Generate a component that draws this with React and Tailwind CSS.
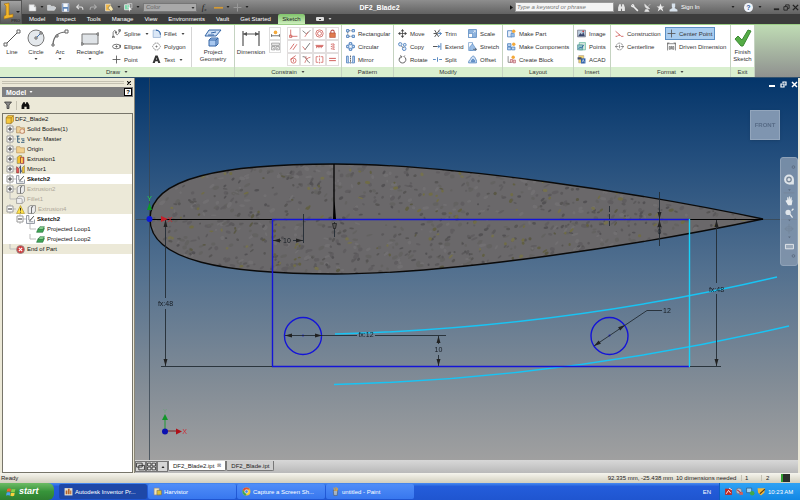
import React, { useState } from "react";

const BLUE = "#4a7ebb";
const RED = "#cf5a56";

// All tool icons are drawn on a 16x16 grid
const icons = {
  spline: <path d="M2 14V6c3-6 5-3 5 1s4 6 7-5M1 13h3v3H1zM6 5h2v2H6zM12 1h3v3h-3z" fill="none" stroke="#555" strokeWidth="1.3" />,
  ellipse: (
    <g fill="none" stroke="#555" strokeWidth="1.4">
      <ellipse cx="8" cy="8" rx="7" ry="4" />
      <path d="M8 6v4M6 8h4M14 6h2v3h-2z" />
    </g>
  ),
  point: <path d="M8 1v14M1 8h14" stroke="#555" strokeWidth="1.5" />,
  fillet: (
    <g>
      <path d="M2 15V2h5c5 0 8 4 8 8v5z" fill="#dbe8f7" stroke="#7a9cc4" />
      <path d="M7 2c5 0 8 4 8 8" fill="none" stroke="#3465a4" strokeWidth="2" />
    </g>
  ),
  polygon: (
    <g fill="none" stroke="#666" strokeWidth="1.2">
      <path d="M5 2h6l4 6-4 6H5L1 8z" strokeDasharray="3 1" />
      <path d="M8 6v4M6 8h4" />
    </g>
  ),
  text: <path d="M1 14 6 1h4l5 13h-4l-1-3H6l-1 3zM7 8h2L8 5z" fill="#333" fillRule="evenodd" />,
  rectangular: (
    <g fill="#d7e6f7" stroke={BLUE} strokeWidth="1.6">
      <path d="M5 3h6M3 5v6M5 13h6" stroke="#666" strokeDasharray="2 1" />
      <path d="M1 1h4v4H1zM11 1h4v4h-4zM1 11h4v4H1zM11 11h4v4h-4z" />
    </g>
  ),
  circular: (
    <g fill="#d7e6f7" stroke={BLUE} strokeWidth="1.5">
      <circle cx="8" cy="8" r="5.5" fill="none" stroke="#7aa2d2" />
      <path d="M6 1h4v4H6zM6 11h4v4H6zM1 6h4v4H1zM11 6h4v4h-4z" />
    </g>
  ),
  mirror: (
    <g>
      <path d="M1 2h3v9l2 3H1zM15 2h-3v9l-2 3h5z" fill="#cfe0f5" stroke={BLUE} strokeWidth="1.5" />
      <path d="M8 1v14" stroke="#333" strokeDasharray="3 1" strokeWidth="1.3" />
    </g>
  ),
  move: (
    <g fill="#444">
      <path d="M8 0l3 4H5zM8 16l3-4H5zM0 8l4-3v6zM16 8l-4-3v6z" />
      <path d="M8 3v10M3 8h10" stroke="#444" strokeWidth="1.4" />
    </g>
  ),
  copy: (
    <g fill="#e3edf9" stroke={BLUE} strokeWidth="1.5">
      <circle cx="4" cy="4" r="3" />
      <circle cx="12" cy="5" r="2.5" />
      <circle cx="11" cy="12" r="3.2" />
      <path d="m6 7 3 3" stroke="#444" />
    </g>
  ),
  rotate: <path d="M5 3a6 6 0 1 0 6 0M4 1l3 2-3 3M12 1l-2 2" fill="none" stroke="#555" strokeWidth="1.6" />,
  trim: (
    <g fill="none" strokeWidth="1.6">
      <path d="m3 2 7 12M12 1 3 14M1 8h5" stroke="#444" />
      <path d="M9 8h6M11 5l4 3-4 4" stroke={BLUE} />
    </g>
  ),
  extend: (
    <g fill="none" strokeWidth="1.6">
      <path d="M0 8h8" stroke="#444" />
      <path d="M8 8h4M9 5l3 3-3 3M14 2v12" stroke={BLUE} />
    </g>
  ),
  split: <path d="M0 8h5M11 8h5M8 4v8" stroke={BLUE} strokeWidth="1.6" />,
  scale: (
    <g>
      <path d="M1 1h14v14H1z" fill="#8fb4de" stroke={BLUE} strokeWidth="1.3" />
      <path d="M1 8h7v7H1z" fill="#fff" stroke={BLUE} />
      <path d="m9 7 4-4M10 3h3v3" stroke="#fff" fill="none" />
    </g>
  ),
  stretch: (
    <g>
      <path d="M1 1h7v14H1z" fill="#fff" stroke={BLUE} />
      <path d="M8 3l6 9v3H3V9z" fill="#9dbfe6" stroke={BLUE} />
      <path d="M9 13h6M13 11l2 2-2 2" stroke="#333" fill="none" />
    </g>
  ),
  offset: (
    <g fill="#cfe0f5" stroke={BLUE} strokeWidth="1.4">
      <path d="M1 14c0-5 3-5 4-8s5-6 7-2 4 6 3 10z" />
      <path d="M6 12c0-3 2-5 4-4s2 3 2 4z" fill="#6c97cc" />
    </g>
  ),
  makePart: (
    <g>
      <path d="M1 3h8v11H1z" fill="#e6effa" stroke={BLUE} strokeWidth="1.4" />
      <path d="M7 8h6v6H7z" fill="#9dbfe6" stroke={BLUE} />
      <circle cx="12" cy="4" r="3" fill="#f4a93a" />
    </g>
  ),
  makeComponents: (
    <g>
      <path d="M1 3h6v5H1zM1 9h6v5H1zM8 9h6v5H8z" fill="#bdd5f0" stroke={BLUE} strokeWidth="1.4" />
      <circle cx="12" cy="4" r="3" fill="#f4a93a" />
    </g>
  ),
  createBlock: (
    <g>
      <path d="M2 2v11h6" fill="none" stroke="#777" strokeWidth="1.4" />
      <path d="M6 8h4v5H6zM11 9h4v5h-4z" fill="#f3d2cd" stroke="#a45" />
      <circle cx="11" cy="4" r="3" fill="#f4a93a" />
    </g>
  ),
  image: (
    <g>
      <path d="M1 2h14v12H1z" fill="#bcd" stroke="#556" />
      <path d="m2 13 4-6 3 3 2-5 3 8z" fill="#39466b" />
      <circle cx="11" cy="4" r="1.5" fill="#c33" />
    </g>
  ),
  points: (
    <g>
      <path d="M4 1h11v13H4z" fill="#d6e9dc" stroke="#4a8" />
      <path d="M1 5h9v9H1z" fill="#8fc5c5" stroke="#3b7f86" />
      <path d="m3 12 3-3 2 2 4-6" fill="none" stroke="#2458a0" strokeWidth="1.6" />
    </g>
  ),
  acad: (
    <g>
      <path d="M3 1h9v13H3z" fill="#f2d36a" stroke="#a98" />
      <path d="M7 6h8v9H7z" fill="#2d5fa8" />
      <path d="M1 4h7v4H1z" fill="#444f68" />
      <path d="m9 13 2-5 2 5" stroke="#fff" fill="none" />
    </g>
  ),
  construction: <path d="m1 4 8 7M1 13h3l2-2h3l2 2h4" fill="none" stroke={RED} strokeWidth="1.5" />,
  centerline: (
    <g fill="none" stroke="#666" strokeWidth="1.2">
      <circle cx="8" cy="8" r="6" strokeDasharray="4 1" />
      <path d="M0 8h6M10 8h6M8 5v6" />
    </g>
  ),
  driven: (
    <g fill="none" stroke="#555" strokeWidth="1.2">
      <path d="M1 1v14M15 1v14M1 3h14M1 3l3-2M15 3l-3-2M4 8h2v5H4zM10 8h2v5h-2zM8 7v6" />
    </g>
  ),
  autoDim: (
    <g>
      <path d="M1 9v5M15 9v5M1 12h14" stroke="#555" strokeWidth="1.4" />
      <circle cx="8" cy="6" r="3.2" fill="#f4a93a" />
    </g>
  ),
  showDim: (
    <g fill="#eee" stroke="#888" strokeWidth="1.2">
      <path d="M1 2h14v4H1zM1 8h6v6H1zM9 8h6v6H9zM3 10l2 2M11 12l2-2" />
    </g>
  ),
  // constraint glyphs
  coincident: <path d="M3 1v12h12M1 11h4v4H1z" fill="none" stroke={RED} strokeWidth="1.4" />,
  collinear: (
    <g fill="none">
      <path d="m1 3 7 6 7-7" stroke="#555" strokeWidth="1.2" />
      <path d="m5 14 6-9" stroke={RED} strokeWidth="1.3" />
    </g>
  ),
  concentric: (
    <g fill="none" stroke={RED} strokeWidth="1.4">
      <circle cx="8" cy="8" r="6.5" />
      <circle cx="8" cy="8" r="3.5" />
    </g>
  ),
  fix: (
    <g>
      <path d="M5 8V5a3 3 0 0 1 6 0v3" fill="none" stroke="#b55" strokeWidth="1.8" />
      <path d="M3 7h10v8H3z" fill="#e07a4e" stroke="#b0442f" />
    </g>
  ),
  parallel: <path d="M2 13 9 3M7 14l7-10" stroke={RED} strokeWidth="1.5" />,
  perpendicular: (
    <g fill="none" strokeWidth="1.4">
      <path d="M5 14 14 2" stroke="#555" />
      <path d="m1 8 5 6" stroke={RED} />
    </g>
  ),
  horizontal: <path d="M1 6h14M2 10h2M6 10h2M10 10h2M2 8h12" stroke={RED} strokeWidth="1.6" />,
  vertical: <path d="M9 2v12M6 3v2M6 7v2M6 11v2M11 4v2M11 8v2M11 12v2" stroke={RED} strokeWidth="1.6" />,
  tangent: (
    <g fill="none" stroke={RED} strokeWidth="1.4">
      <circle cx="8" cy="10" r="4.5" />
      <path d="m2 8 10-7M8 8v4" />
    </g>
  ),
  smooth: (
    <g fill="none" strokeWidth="1.3">
      <path d="M1 3c8-1 6 8 13 11" stroke="#555" />
      <path d="M5 14c2-6 4-9 10-10M7 2v5" stroke={RED} />
    </g>
  ),
  symmetric: <path d="M6 3H2v10h4M10 3h4v10h-4M8 1v3M8 6v4M8 12v3" fill="none" stroke={RED} strokeWidth="1.3" />,
  equal: <path d="M2 6h12M2 10h12" stroke={RED} strokeWidth="1.7" />,
  // title bar
  newDoc: <path d="M2 3h9l3 4v7H2zM11 3v4h3" fill="#f1f3f5" stroke="#ccc" />,
  open: <path d="M1 13V4h5l1 2h6v2h3l-3 5z" fill="#c9ced3" stroke="#eee" />,
  save: (
    <g>
      <path d="M2 1h12v14H2z" fill="#5f86b8" stroke="#dde" />
      <path d="M4 1h8v6H4zM5 10h6v5H5z" fill="#f4f6f8" />
    </g>
  ),
  undo: <path d="M7 3 3 7l4 4M3 7h8c3 0 3 3 3 5" fill="none" stroke="#ddd" strokeWidth="2" />,
  redo: <path d="m9 3 4 4-4 4M13 7H5c-3 0-3 3-3 5" fill="none" stroke="#aaa" strokeWidth="2" />,
  update: (
    <g>
      <path d="M1 2h9v12H1z" fill="#f2b84a" stroke="#fff" />
      <path d="m5 9 5-6 5 8-4 4z" fill="#f9e9b0" stroke="#555" />
    </g>
  ),
  select: (
    <g>
      <path d="M1 3h9v9H1z" fill="#7da" stroke="#eee" strokeWidth="1.4" />
      <path d="M6 1h8v8H6z" fill="none" stroke="#ccc" strokeWidth="1.4" />
      <path d="m8 6 6 6-3 0-1 4z" fill="#fff" />
    </g>
  ),
  gold: <path d="M0 7h16v3H0z" fill="#d59b35" />,
  plus: <path d="M8 1v14M1 8h14" stroke="#999" strokeWidth="1.8" />,
  binoculars: <path d="M2 14V8l2-6h3v4h2V2h3l2 6v6h-5v-4H7v4z" fill="#e5e5e5" />,
  wrench: <path d="M3 2c3-1 5 1 5 4l7 7-2 2-7-7C3 8 1 6 2 3l2 2 1-1z" fill="#eee" />,
  dish: <path d="M3 2c0 6 4 9 9 8zM8 7l5-5M5 11l-2 4h8l-3-4" fill="#e5e5e5" stroke="#e5e5e5" />,
  star: <path d="m8 1 2 5h5l-4 3 2 6-5-4-5 4 2-6-4-3h5z" fill="#eee" />,
  user: <path d="M5 1h6v5l-1 3 5 3v3H1v-3l5-3-1-3z" fill="#d8e2ec" />,
  // browser tree
  part: <path d="M2 5 5 1h10v10l-4 4H2zM2 5h9v10M11 5l4-4" fill="#f6c83c" stroke="#8a6417" />,
  bodies: (
    <g>
      <path d="M1 3h6l1 2h7v9H1z" fill="#ecd09a" stroke="#a07b4a" />
      <circle cx="11" cy="11" r="4" fill="#f6e6cf" stroke="#b05a3a" />
    </g>
  ),
  view: <path d="M1 2h5M3 2v11h4M3 7h4M9 7h6M9 13h6M11 10h4" fill="none" stroke="#335c7a" strokeWidth="1.7" />,
  folder: <path d="M1 3h6l1 2h7v9H1z" fill="#f1cf8d" stroke="#b08c54" />,
  extrusion: (
    <g>
      <path d="M2 4 6 1h4v11l-4 3H2z" fill="#f5c22e" stroke="#775" />
      <path d="M8 4h6v11H8z" fill="#e3473e" stroke="#733" />
      <path d="M9 5h3v9H9z" fill="#ffd954" />
    </g>
  ),
  mirrorPart: (
    <g>
      <path d="M1 3 5 6v8H1z" fill="#e55" stroke="#733" />
      <path d="M15 1l-4 4v9h4z" fill="#f5c22e" stroke="#775" />
      <path d="M8 1v14M6 3l4 9" stroke="#347" strokeWidth="1.6" />
    </g>
  ),
  sketch: (
    <g fill="none" stroke="#6b7280" strokeWidth="1.3">
      <path d="M1 1h4v8M1 1v14h14V8M5 12h8M5 9h4" />
      <path d="m7 10 7-8" stroke="#333" strokeWidth="1.6" />
    </g>
  ),
  greyExtrusion: <path d="M2 4 6 1h4v3H8v11H2zM8 4l3-3h4v10l-3 4H8z" fill="#ececec" stroke="#555" />,
  greyFillet: <path d="M1 6 5 2h6c3 0 4 3 4 5v4l-4 4H1zM1 6h7c2 0 3 1 3 4v5" fill="#eee" stroke="#777" />,
  warning: (
    <g>
      <path d="m8 1 7 14H1z" fill="#ffe14a" stroke="#a58a1a" />
      <path d="M8 5v5M8 12v1.500" stroke="#222" strokeWidth="1.6" />
    </g>
  ),
  loop: (
    <g>
      <path d="m1 13 3-7h11l-3 7z" fill="#3fa455" stroke="#1f6b34" />
      <path d="m4 8 3-5h8l-3 5z" fill="#86cf8d" stroke="#1f6b34" />
    </g>
  ),
  end: (
    <g>
      <circle cx="8" cy="8" r="7" fill="#d33a3a" stroke="#8d8d8d" strokeWidth="1.5" />
      <path d="m5 5 6 6M11 5l-6 6" stroke="#fff" strokeWidth="2" />
    </g>
  ),
  filter: <path d="M1 2h14l-5 6v7H6V8z" fill="#8a8a8a" stroke="#333" strokeWidth="1.5" />,
  find: <path d="M1 14V8l3-6h3v3h2V2h3l3 6v6h-5v-4H6v4z" fill="#111" />,
  cascade: <path d="M1 2h10v7H1zM5 6h10v8H5z" fill="#ddd" stroke="#222" strokeWidth="1.4" />,
  tile: <path d="M1 2h6v5H1zM9 2h6v5H9zM1 9h6v5H1zM9 9h6v5H9z" fill="#eee" stroke="#222" strokeWidth="1.4" />,
  // taskbar
  inventor: (
    <g>
      <path d="M1 2h14v13H1z" fill="#e8e0cf" />
      <path d="M3 6h3v7H3zM7 3h3v10H7zM11 6h2v7h-2z" fill="#b3652e" />
    </g>
  ),
  harvistor: (
    <g>
      <path d="M2 2h9v12H2z" fill="#f4e6b8" stroke="#987" />
      <path d="M7 6h8v8H7z" fill="#d8c13b" stroke="#765" />
    </g>
  ),
  chrome: (
    <g>
      <circle cx="8" cy="8" r="7" fill="#f3c932" />
      <path d="M8 1a7 7 0 0 1 6 3.500H8A3.500 3.500 0 0 0 5 10L1.500 5A7 7 0 0 1 8 1" fill="#dd4b39" />
      <path d="M1.500 5 5 10l3 2-1 3A7 7 0 0 1 1.500 5" fill="#3aa757" />
      <circle cx="8" cy="8" r="3" fill="#4a86e8" stroke="#fff" />
    </g>
  ),
  paint: (
    <g>
      <path d="M4 6h8l-1 9H5z" fill="#a7b4c4" stroke="#456" />
      <path d="M5 1l2 6M9 0v7M12 2l-2 5" stroke="#d9a441" strokeWidth="2" />
    </g>
  ),
  trayRed: (
    <g>
      <path d="M2 3h12v11H2z" fill="#c3261f" />
      <path d="m4 12 4-6 4 5M9 2l5 3" stroke="#fff" fill="none" strokeWidth="1.6" />
    </g>
  ),
  trayNet: (
    <g>
      <circle cx="7" cy="7" r="5" fill="#b9c0c8" stroke="#667" />
      <path d="M8 9h6v5H8z" fill="#d4605a" />
      <path d="m4 5 6 5" stroke="#b33" strokeWidth="2" />
    </g>
  ),
  trayPc: (
    <g>
      <path d="M1 2h9v8H1z" fill="#9fd0ee" stroke="#246" />
      <circle cx="11" cy="11" r="4" fill="#3fa84a" />
    </g>
  ),
  trayShield: (
    <g>
      <path d="M1 2h13l-1 8-6 5-5-5z" fill="#f3b93a" />
      <path d="m5 12 9-8" stroke="#5a3b12" strokeWidth="2" />
    </g>
  ),
};

const Icon = ({ name, className = "size-[9px]" }) => (
  <svg viewBox="0 0 16 16" className={`shrink-0 ${className}`} aria-hidden="true">
    {icons[name]}
  </svg>
);

const Caret = ({ className = "fill-[#444]" }) => (
  <svg viewBox="0 0 6 4" className={`h-[2px] w-[4px] shrink-0 ${className}`} aria-hidden="true">
    <path d="M0 0h6L3 4z" />
  </svg>
);

const Tool = ({ icon, label, caret, active }) => (
  <button
    type="button"
    className={`flex h-[13px] items-center gap-[3px] whitespace-nowrap ${
      active ? "-ml-[2px] w-[50px] border border-[#5b8fc4] bg-[#a9cdf0] pl-px" : ""
    }`}
  >
    <Icon name={icon} />
    {label}
    {caret && <Caret className="ml-px fill-[#444]" />}
  </button>
);

const BigTool = ({ lines, caret, className, children }) => (
  <button type="button" className={`flex flex-col items-center ${className}`}>
    <svg viewBox="0 0 18 18" className="mt-[2px] mb-[2px] size-[18px]" aria-hidden="true">
      {children}
    </svg>
    {lines.map((l) => (
      <span key={l} className="leading-[7px] whitespace-nowrap">{l}</span>
    ))}
    {caret && <Caret className="mt-[2px] fill-[#444]" />}
  </button>
);

const Panel = ({ title, caret, className, children }) => (
  <section className={`flex shrink-0 flex-col border-r border-[#c5d3c1] ${className}`}>
    <div className="flex h-[42px] bg-white pt-[2px]">{children}</div>
    <h2 className="flex h-[10px] items-center justify-center gap-[4px] bg-[#d9efcf]">
      {title}
      {caret && <Caret />}
    </h2>
  </section>
);

const menuTabs = ["Model", "Inspect", "Tools", "Manage", "View", "Environments", "Vault", "Get Started"];

const constraints = [
  "coincident", "collinear", "concentric", "fix",
  "parallel", "perpendicular", "horizontal", "vertical",
  "tangent", "smooth", "symmetric", "equal",
];

const TitleButton = ({ icon, label, className = "w-[14px]" }) => (
  <button type="button" aria-label={label} className={`flex h-full items-center justify-center ${className}`}>
    <Icon name={icon} />
  </button>
);

const MenuCaret = () => (
  <span className="flex w-[5px] shrink-0 justify-center">
    <Caret className="fill-[#222]" />
  </span>
);

const TitleBar = () => (
  <div className="flex h-[14px] items-center bg-linear-to-b from-[#8e8e8e] to-[#626262] pl-[3px] text-white">
    <TitleButton icon="newDoc" label="New" />
    <MenuCaret />
    <TitleButton icon="open" label="Open" />
    <TitleButton icon="save" label="Save" />
    <TitleButton icon="undo" label="Undo" />
    <TitleButton icon="redo" label="Redo" />
    <TitleButton icon="update" label="Update" className="ml-[2px] w-[14px]" />
    <MenuCaret />
    <TitleButton icon="select" label="Select" />
    <MenuCaret />
    <div className="relative ml-[3px] h-[9px] w-[54px] shrink-0">
      <select
        aria-label="Color"
        className="block h-full w-full appearance-none border border-[#777] bg-[#a9a9a9] pl-[2px] text-[6px] leading-[7px] text-[#666] italic"
      >
        <option>Color</option>
      </select>
      <Caret className="pointer-events-none absolute top-[4px] right-[2px] fill-[#333]" />
    </div>
    <button type="button" className="w-[14px] font-['Liberation_Serif',serif] text-[9px] text-[#222] italic">
      f<sub className="text-[5px]">x</sub>
    </button>
    <TitleButton icon="gold" label="Line style" />
    <MenuCaret />
    <TitleButton icon="plus" label="Add" />
    <MenuCaret />
    <h1 className="flex-1 text-center text-[7px] font-bold">DF2_Blade2</h1>
    <svg viewBox="0 0 4 6" className="mr-[2px] h-[5px] w-[3px] fill-[#111]" aria-hidden="true">
      <path d="M0 0v6l4-3z" />
    </svg>
    <input
      type="text"
      aria-label="Search help"
      placeholder="Type a keyword or phrase"
      className="h-[10px] w-[99px] border border-[#9a9a9a] bg-[#f4f4f4] px-px text-[6px] italic placeholder:text-[#777]"
    />
    <div className="flex items-center pl-px">
      <TitleButton icon="binoculars" label="Search" className="w-[13px]" />
      <TitleButton icon="wrench" label="Subscription" className="w-[13px]" />
      <TitleButton icon="dish" label="Communication" className="w-[13px]" />
      <TitleButton icon="star" label="Favorites" className="w-[13px]" />
      <TitleButton icon="user" label="Account" className="w-[13px]" />
    </div>
    <button type="button" className="w-[50px] pl-px text-left">Sign In</button>
    <MenuCaret />
    <button
      type="button"
      aria-label="Help"
      className="ml-[9px] size-[9px] rounded-full bg-[#f0f4fa] text-[7px] font-bold text-[#2e5a9c]"
    >
      ?
    </button>
    <span className="ml-[4px] flex"><MenuCaret /></span>
    <div className="ml-[9px] flex">
      <button type="button" aria-label="Minimize" className="w-[10px]">
        <svg viewBox="0 0 8 8" className="mx-auto size-[7px]"><path d="M1 5h6v2H1z" fill="#222" /></svg>
      </button>
      <button type="button" aria-label="Restore" className="w-[10px]">
        <svg viewBox="0 0 8 8" className="mx-auto size-[7px]"><path d="M3 3V1h4v4H5M1 3h4v4H1z" fill="none" stroke="#222" /></svg>
      </button>
      <button type="button" aria-label="Close" className="w-[9px]">
        <svg viewBox="0 0 8 8" className="mx-auto size-[7px]"><path d="m1 1 6 6M7 1 1 7" stroke="#222" strokeWidth="1.6" /></svg>
      </button>
    </div>
  </div>
);

const MenuTabs = () => (
  <nav className="flex h-[10px] items-center gap-[11px] bg-[#3c3c3c] pl-[7px] text-white">
    {menuTabs.map((t) => (
      <button key={t} type="button" className="whitespace-nowrap">{t}</button>
    ))}
    <button
      type="button"
      className="-ml-[4px] h-full w-[27px] rounded-t-[2px] bg-linear-to-b from-[#7fc36a] to-[#cdeebd] text-[#222]"
    >
      Sketch
    </button>
    <button type="button" aria-label="Ribbon display" className="flex items-center gap-[4px]">
      <span className="flex h-[4px] w-[8px] items-center justify-center rounded-[1px] bg-[#ddd]">
        <span className="h-px w-[2px] bg-[#333]" />
      </span>
      <Caret className="fill-[#ccc]" />
    </button>
  </nav>
);

const Ribbon = () => (
  <div className="flex overflow-hidden border-t border-b border-t-[#9ccf86] border-b-[#33526e] bg-linear-to-b from-[#bfdcb4] to-[#8f918f] text-[#333]">
    <Panel title="Draw" caret className="w-[235px]">
      <BigTool lines={["Line"]} className="w-[24px]">
        <path d="M3 15 15 3" stroke="#555" />
        <path d="M1 14h3v3H1zM14 1h3v3h-3z" fill="#fff" stroke="#666" />
      </BigTool>
      <BigTool lines={["Circle"]} caret className="w-[24px]">
        <circle cx="9" cy="9" r="8" fill="#e4e8ec" stroke="#777" />
        <path d="m9 9 5-5" stroke="#3f6fae" />
        <path d="M8 8h2v2H8zM13 3h2v2h-2z" fill="#fff" stroke="#666" />
      </BigTool>
      <BigTool lines={["Arc"]} caret className="w-[24px]">
        <path d="M2 16C2 8 7 3 15 3" fill="none" stroke="#666" strokeWidth="1.2" />
        <path d="M1 15h2v2H1zM5 6h2v2H5zM14 1h3v3h-3z" fill="#fff" stroke="#666" />
      </BigTool>
      <BigTool lines={["Rectangle"]} caret className="w-[36px]">
        <path d="M1 5h16v10H1z" fill="#dfe3e7" stroke="#777" />
        <path d="M0 14h2v2H0zM16 4h2v2h-2z" fill="#fff" stroke="#666" />
      </BigTool>
      <div className="ml-[4px] grid grid-flow-col grid-cols-[40px_36px] grid-rows-[13px_13px_13px]">
        <Tool icon="spline" label="Spline" caret />
        <Tool icon="ellipse" label="Ellipse" />
        <Tool icon="point" label="Point" />
        <Tool icon="fillet" label="Fillet" caret />
        <Tool icon="polygon" label="Polygon" />
        <Tool icon="text" label="Text" caret />
      </div>
      <div className="ml-[3px] flex border-l border-[#d5d5d5]">
        <BigTool lines={["Project", "Geometry"]} className="w-[42px]">
          <path d="M5 1h12l-5 6H1z" fill="#cfe0f5" stroke="#3465a4" />
          <path d="m7 4 5-1M4 6h6" stroke="#3465a4" />
          <path d="M5 11l2-2h7v6l-2 2H5zM5 11h7v6M12 11l2-2" fill="#a9c8ef" stroke="#3465a4" />
        </BigTool>
      </div>
    </Panel>

    <Panel title="Constrain" caret className="w-[107px]">
      <BigTool lines={["Dimension"]} className="w-[32px]">
        <path d="M1 2v15M17 2v15M1 5h16" stroke="#555" strokeWidth="1.2" />
        <path d="m1 5 4-2v4zM17 5l-4-2v4z" fill="#555" />
      </BigTool>
      <div className="ml-[2px] flex flex-col">
        <button type="button" aria-label="Automatic dimensions" className="flex h-[13px] w-[12px] items-center justify-center border border-[#ddd]">
          <Icon name="autoDim" />
        </button>
        <button type="button" aria-label="Show constraints" className="flex h-[13px] w-[12px] items-center justify-center border border-[#ddd]">
          <Icon name="showDim" />
        </button>
      </div>
      <div className="ml-[6px] grid grid-cols-[13px_13px_13px_13px] grid-rows-[13px_13px_13px]">
        {constraints.map((c) => (
          <button key={c} type="button" aria-label={c} className="flex items-center justify-center border border-[#e2dede]">
            <Icon name={c} />
          </button>
        ))}
      </div>
    </Panel>

    <Panel title="Pattern" className="w-[52px]">
      <div className="pl-[4px]">
        <Tool icon="rectangular" label="Rectangular" />
        <Tool icon="circular" label="Circular" />
        <Tool icon="mirror" label="Mirror" />
      </div>
    </Panel>

    <Panel title="Modify" className="w-[109px]">
      <div className="grid grid-flow-col grid-cols-[35px_35px_35px] grid-rows-[13px_13px_13px] pl-[4px]">
        <Tool icon="move" label="Move" />
        <Tool icon="copy" label="Copy" />
        <Tool icon="rotate" label="Rotate" />
        <Tool icon="trim" label="Trim" />
        <Tool icon="extend" label="Extend" />
        <Tool icon="split" label="Split" />
        <Tool icon="scale" label="Scale" />
        <Tool icon="stretch" label="Stretch" />
        <Tool icon="offset" label="Offset" />
      </div>
    </Panel>

    <Panel title="Layout" className="w-[71px]">
      <div className="pl-[4px]">
        <Tool icon="makePart" label="Make Part" />
        <Tool icon="makeComponents" label="Make Components" />
        <Tool icon="createBlock" label="Create Block" />
      </div>
    </Panel>

    <Panel title="Insert" className="w-[37px]">
      <div className="pl-[3px]">
        <Tool icon="image" label="Image" />
        <Tool icon="points" label="Points" />
        <Tool icon="acad" label="ACAD" />
      </div>
    </Panel>

    <Panel title="Format" caret className="w-[120px]">
      <div className="grid grid-flow-col grid-cols-[52px_60px] grid-rows-[13px_13px_13px] pl-[4px]">
        <Tool icon="construction" label="Construction" />
        <Tool icon="centerline" label="Centerline" />
        <span />
        <Tool icon="point" label="Center Point" active />
        <Tool icon="driven" label="Driven Dimension" />
      </div>
    </Panel>

    <Panel title="Exit" className="w-[24px]">
      <BigTool lines={["Finish", "Sketch"]} className="w-[24px]">
        <path d="m1 10 3-3 4 4 6-10 3 1-8 15H7z" fill="#55ab46" stroke="#3c8a33" />
      </BigTool>
    </Panel>
  </div>
);

const treeItems = [
  { label: "Solid Bodies(1)", icon: "bodies", expand: "+" },
  { label: "View: Master", icon: "view", expand: "+" },
  { label: "Origin", icon: "folder", expand: "+" },
  { label: "Extrusion1", icon: "extrusion", expand: "+" },
  { label: "Mirror1", icon: "mirrorPart", expand: "+" },
  { label: "Sketch2", icon: "sketch", expand: "+", bold: true, light: true },
  { label: "Extrusion2", icon: "greyExtrusion", expand: "+", dim: true },
  { label: "Fillet1", icon: "greyFillet", dim: true },
  { label: "Extrusion4", icon: "greyExtrusion", expand: "-", dim: true, warn: true },
  { label: "Sketch2", icon: "sketch", expand: "-", bold: true, light: true, level: 1 },
  { label: "Projected Loop1", icon: "loop", light: true, level: 2 },
  { label: "Projected Loop2", icon: "loop", light: true, level: 2 },
  { label: "End of Part", icon: "end" },
];

const indents = ["pl-[3px]", "pl-[13px]", "pl-[23px]"];

const TreeRow = ({ item }) => (
  <li
    className={`flex h-[10px] items-center gap-[2px] whitespace-nowrap ${indents[item.level || 0]} ${
      item.light ? "bg-white" : "bg-[#ece9d8]"
    } ${item.bold ? "font-bold" : ""} ${item.dim ? "text-[#aca899]" : ""}`}
  >
    <svg viewBox="0 0 10 10" className="h-[10px] w-[10px] -mr-[2px] shrink-0" aria-hidden="true">
      <path d={item.expand ? "M4 0v10M7 5h3" : "M4 0v5h6"} fill="none" stroke="#bbb" />
      {item.expand && <path d="M1 2h6v6H1z" fill="#fff" stroke="#999" />}
      {item.expand && <path d={item.expand === "+" ? "M2 5h4M4 3v4" : "M2 5h4"} stroke="#333" />}
    </svg>
    {item.warn && <Icon name="warning" />}
    <Icon name={item.icon} />
    {item.label}
  </li>
);

const ModelBrowser = () => (
  <aside className="flex w-[135px] shrink-0 flex-col border-r border-[#8a8778] bg-[#ece9d8] pr-px pl-[2px]">
    <div className="flex h-[9px] items-center gap-[3px] pr-[2px]">
      <div className="h-[3px] flex-1 border-y border-[#c5c2b2]" />
      <button type="button" aria-label="Close browser">
        <svg viewBox="0 0 6 6" className="size-[4px]"><path d="m0 0 6 6M6 0 0 6" stroke="#111" strokeWidth="1.6" /></svg>
      </button>
    </div>
    <div className="flex h-[10px] items-center bg-[#7f7f7f] pr-px pl-[4px] text-white">
      <h2 className="text-[7px] font-bold">Model</h2>
      <Caret className="ml-[3px] fill-white" />
      <button type="button" aria-label="Browser help" className="ml-auto size-[8px] border border-black bg-white text-[6px] leading-[6px] font-bold text-black">
        ?
      </button>
    </div>
    <div className="flex h-[16px] items-center pl-[2px]">
      <button type="button" aria-label="Filter"><Icon name="filter" className="size-[8px]" /></button>
      <span className="mx-[4px] h-[9px] w-px bg-[#c5c2b2]" />
      <button type="button" aria-label="Find"><Icon name="find" /></button>
    </div>
    <ul className="flex-1 border border-[#77756a] bg-white">
      <li className="flex h-[10px] items-center gap-px bg-[#ece9d8] pl-[2px]">
        <Icon name="part" />
        DF2_Blade2
      </li>
      {treeItems.map((item, i) => (
        <TreeRow key={i} item={item} />
      ))}
    </ul>
  </aside>
);

// simple seeded generator so the stone texture stays the same between renders
const makeSpeckles = (count, colors, size) => {
  let seed = count;
  const rnd = () => {
    seed = (seed * 16807) % 2147483647;
    return seed / 2147483647;
  };
  rnd();
  return Array.from({ length: count }, () => ({
    x: 150 + rnd() * 610,
    y: 163 + rnd() * 112,
    rx: 1 + rnd() * size,
    ry: 0.8 + rnd() * size * 0.5,
    rot: -60 + rnd() * 80,
    fill: colors[Math.floor(rnd() * colors.length)],
  }));
};

const speckles = [
  ...makeSpeckles(700, ["#5a585a", "#777577", "#605f5c"], 2.6),
  ...makeSpeckles(420, ["#454446", "#4b4a48", "#525052"], 1.5),
  ...makeSpeckles(210, ["#75702f", "#5c5a2c", "#7d783c", "#514f30"], 1.8),
];
const foil = "M150 219C150 177 225 164 335 164C450 164 640 193 763 219C640 245 450 274 335 274C225 274 150 261 150 219Z";

const arrows = {
  up: "M0 0l-2 7h4z",
  down: "M0 0l-2-7h4z",
  left: "M0 0l7-2v4z",
  right: "M0 0l-7-2v4z",
};

const Arrow = ({ x, y, dir, fill = "#222" }) => <path d={arrows[dir]} transform={`translate(${x} ${y})`} fill={fill} />;

const Drawing = () => (
  <svg viewBox="135 78 663 382" className="absolute inset-0 h-full w-full" role="img" aria-label="Blade sketch">
    <defs>
      <clipPath id="foil"><path d={foil} /></clipPath>
    </defs>
    <path d={foil} fill="#6a686a" />
    <g clipPath="url(#foil)" opacity="0.6">
      {speckles.map((s, i) => (
        <ellipse key={i} cx={s.x} cy={s.y} rx={s.rx} ry={s.ry} fill={s.fill} transform={`rotate(${s.rot} ${s.x} ${s.y})`} />
      ))}
    </g>
    <path d="M149.500 78V460M136 219.500H798" stroke="#3a4652" strokeWidth="0.8" />
    <path d={foil} fill="none" stroke="#0a0a0a" strokeWidth="1.3" />
    <path d="M150 219.500H763" stroke="#000" strokeWidth="1.2" />
    <path d="M334 164V219" stroke="#000" strokeWidth="1.3" />

    {/* projected curves */}
    <g fill="none" stroke="#18c4f4" strokeWidth="1.5">
      <path d="M335 334Q560 328 777 277" />
      <path d="M334 384.500Q560 379 789 326" />
    </g>

    {/* profile */}
    <g fill="none" stroke="#1414d8" strokeWidth="1.4">
      <path d="M689 219.500H272.500V366.500H689" />
      <circle cx="303" cy="336" r="18.500" />
      <circle cx="609.500" cy="336" r="18.500" />
    </g>
    <path d="M689.500 219V367" stroke="#18d0f8" strokeWidth="1.4" />
    <circle cx="303" cy="335.500" r="1" fill="#1414d8" />
    <circle cx="609.500" cy="335.500" r="1" fill="#1414d8" />

    {/* dimensions */}
    <g fill="none" stroke="#222b33" strokeWidth="0.9">
      <path d="M165.500 220V298M165.500 309V366M161 366.500H272M690 366.500H721" />
      <path d="M716.500 220V283M716.500 294V366" />
      <path d="M273 240.500H281M293 240.500H303M303.500 214V243" />
      <path d="M334.500 222V237M659.500 192V246M609.500 206V212M609.500 214V219M609.500 221V226" />
      <path d="M285 335.500H357M375 335.500H446M438.500 336V344M438.500 355V366" />
      <path d="M594 346 647 310.500H662" />
    </g>
    <Arrow x={165.5} y={220} dir="up" />
    <Arrow x={165.5} y={366} dir="down" />
    <Arrow x={716.5} y={220} dir="up" />
    <Arrow x={716.5} y={366} dir="down" />
    <Arrow x={273} y={240.5} dir="left" />
    <Arrow x={303} y={240.5} dir="right" />
    <Arrow x={285} y={335.5} dir="left" />
    <Arrow x={322} y={335.5} dir="right" />
    <Arrow x={438.5} y={336} dir="up" />
    <Arrow x={438.5} y={366} dir="down" />
    <path d="M334.500 200l-1.500 19h3z" fill="#000" />
    <path d="M332.500 223.500h4l-1 5h-2z" fill="#555" stroke="#222" strokeWidth="0.8" />
    <Arrow x={659.5} y={219} dir="down" />
    <Arrow x={659.5} y={220} dir="up" />
    <path d="M0 0l7-2v4z" transform="translate(594 346) rotate(-34)" fill="#222" />
    <path d="M0 0l-7-2v4z" transform="translate(625 325) rotate(-34)" fill="#222" />
    <g fill="#161c22" fontSize="7" textAnchor="middle">
      <text x="165.500" y="306">fx:48</text>
      <text x="716.500" y="292">fx:48</text>
      <text x="366" y="337">fx:12</text>
      <text x="287" y="243">10</text>
      <text x="438.500" y="352">10</text>
      <text x="667" y="313">12</text>
      <text x="659.500" y="234">0</text>
    </g>

    {/* origin */}
    <circle cx="149.500" cy="219" r="3" fill="#0b16d8" />
    <path d="M149.500 203l-2.500 7h5z" fill="#0c9a24" />
    <path d="M168 219l-7-3v6z" fill="#c4202a" />
    <text x="149.500" y="201" fontSize="7" textAnchor="middle" fill="#28d048">Y</text>
    <text x="170" y="221.500" fontSize="7" textAnchor="middle" fill="#d8202a">X</text>

    {/* axis indicator */}
    <path d="M165 431V419" stroke="#1c9a30" />
    <path d="M165 431H176" stroke="#7a2020" />
    <path d="M165 414l-3 6h6z" fill="#12962a" />
    <path d="M182 431.500l-6-3v6z" fill="#b01018" />
    <circle cx="165" cy="431.500" r="3" fill="#0b10b0" />
    <text x="184.500" y="434" fontSize="7" textAnchor="middle" fill="#d02a34">X</text>
    <text x="165" y="413" fontSize="6" textAnchor="middle" fill="#6aa078">Y</text>
  </svg>
);

const NavBar = () => (
  <div className="absolute top-[79px] right-0 flex h-[109px] w-[18px] flex-col items-center justify-between rounded-[3px] border border-[#8fa2b8] bg-[#8a9bb0]/80">
    <svg viewBox="0 0 18 106" className="h-full w-full" aria-hidden="true">
      <circle cx="14" cy="3" r="1.500" fill="none" stroke="#5b6b80" />
      <circle cx="9" cy="17" r="5.500" fill="#dfe5ea" />
      <circle cx="9" cy="17" r="2.500" fill="none" stroke="#7c8b9c" strokeWidth="1.5" />
      <path d="M14.500 17v5.500H9" fill="#dfe5ea" />
      <path d="M8 28h3l-1.500 2z M8 62h3l-1.500 2z M8 81h3l-1.500 2z" fill="#5b6b80" />
      <path d="M3 32h12" stroke="#75869a" />
      <path d="M5 41l2-1v-3h1v3l1-4h1v4l1-3h1v4l1-1-1 6H8z" fill="#e8ecef" />
      <circle cx="8" cy="54" r="3" fill="#dfe5ea" />
      <path d="m10 56 3 4M12 52l2-2" stroke="#e8ecef" strokeWidth="1.5" />
      <path d="M9 67v11M4 72.500h10" stroke="#74869b" />
      <ellipse cx="9" cy="72.500" rx="4" ry="2.500" fill="none" stroke="#74869b" />
      <path d="M5 90h9v5H5z" fill="#9aa9ba" stroke="#e8ecef" />
      <circle cx="14" cy="103" r="1.500" fill="none" stroke="#5b6b80" />
    </svg>
  </div>
);

const Viewport = () => (
  <main className="relative flex-1 bg-[linear-gradient(#04356a,#224d7c_20%,#52708f_50%,#828c96_80%,#a0a0a0)]">
    <Drawing />
    <div className="absolute top-[3px] right-0 flex gap-[4px]">
      <button type="button" aria-label="Minimize document">
        <svg viewBox="0 0 7 7" className="size-[7px]"><path d="M0 4h6v2H0z" fill="#fff" /></svg>
      </button>
      <button type="button" aria-label="Restore document">
        <svg viewBox="0 0 7 7" className="size-[7px]"><path d="M3 2V1h3v3H5M1 3h3v3H1z" fill="none" stroke="#fff" strokeWidth="1.2" /></svg>
      </button>
      <button type="button" aria-label="Close document">
        <svg viewBox="0 0 7 7" className="size-[7px]"><path d="m1 1 5 5M6 1 1 6" stroke="#fff" strokeWidth="1.5" /></svg>
      </button>
    </div>
    <button
      type="button"
      className="absolute top-[32px] right-[18px] size-[30px] border border-[#93a6bd] bg-[#7f95b0] text-[6px] font-bold text-[#586c87] shadow"
    >
      FRONT
    </button>
    <NavBar />
  </main>
);

const DocTabs = ({ active, onSelect }) => (
  <div className="flex h-[13px] items-start bg-linear-to-b from-[#d8d8d8] to-[#b9b9b9] pt-px">
    <button type="button" aria-label="Cascade" className="flex h-[11px] w-[11px] items-center justify-center border border-[#777] bg-[#d6d6d6]">
      <Icon name="cascade" />
    </button>
    <button type="button" aria-label="Tile" className="flex h-[11px] w-[11px] items-center justify-center border border-[#777] bg-[#d6d6d6]">
      <Icon name="tile" />
    </button>
    <button type="button" aria-label="More documents" className="flex h-[11px] w-[11px] items-center justify-center border border-[#777] bg-[#d6d6d6]">
      <Caret className="rotate-180 fill-[#222]" />
    </button>
    {["DF2_Blade2.ipt", "DF2_Blade.ipt"].map((doc) => (
      <button
        key={doc}
        type="button"
        onClick={() => onSelect(doc)}
        className={`flex h-[10px] items-center gap-[3px] rounded-b-[2px] border border-t-0 border-[#777] px-[4px] text-[#222] ${
          active === doc ? "bg-white" : "bg-[#cfcfcf]"
        }`}
      >
        {doc}
        {active === doc && <span className="text-[5px] text-[#666]">⊠</span>}
      </button>
    ))}
  </div>
);

const StatusBar = () => (
  <footer className="flex h-[10px] items-center bg-linear-to-b from-[#f6f5ee] to-[#d2cfbe] pr-[10px] pl-px text-[#222]">
    <span className="flex-1">Ready</span>
    <span>92.335 mm, -25.438 mm</span>
    <span className="ml-[3px] w-[65px] whitespace-nowrap">10 dimensions needed</span>
    <span className="w-[20px] border-l border-[#c5c2b2] pl-[3px]">1</span>
    <span className="w-[20px] border-l border-[#c5c2b2] pl-[4px]">2</span>
    <span className="h-[8px] w-[9px] border-l-2 border-[#2fa02f] bg-[#2b2f2b]" />
  </footer>
);

const tasks = [
  { label: "Autodesk Inventor Pr...", icon: "inventor", active: true },
  { label: "Harvistor", icon: "harvistor" },
  { label: "Capture a Screen Sh...", icon: "chrome" },
  { label: "untitled - Paint", icon: "paint" },
];

const Taskbar = () => (
  <div className="flex h-[17px] bg-linear-to-b from-[#4a8cf0] via-[#245ddb] via-20% to-[#1f55d0] text-white">
    <button
      type="button"
      className="flex w-[54px] items-center gap-[3px] rounded-r-[6px] bg-linear-to-b from-[#6cbb64] via-[#37943a] to-[#2f7f31] pl-[6px] text-[9px] font-bold italic"
    >
      <svg viewBox="0 0 16 16" className="size-[10px]" aria-hidden="true">
        <path d="M2 3c2-1 4-1 6 0L7 8c-2-1-4-1-6 0z" fill="#f0622d" />
        <path d="M9 3c2 1 4 1 6 0l-1 5c-2 1-4 1-6 0z" fill="#8cd149" />
        <path d="M1 9c2-1 4-1 6 0l-1 5c-2-1-4-1-6 0z" fill="#4da3f0" />
        <path d="M8 9c2 1 4 1 6 0l-1 5c-2 1-4 1-6 0z" fill="#fbd03f" />
      </svg>
      start
    </button>
    <div className="ml-[5px] flex flex-1 gap-px py-px">
      {tasks.map((t) => (
        <button
          key={t.label}
          type="button"
          className={`flex w-[88px] items-center gap-[2px] rounded-[2px] pl-[5px] whitespace-nowrap ${
            t.active ? "bg-[#1e48a8]" : "bg-linear-to-b from-[#4f8df8] to-[#3877ee]"
          }`}
        >
          <Icon name={t.icon} />
          {t.label}
        </button>
      ))}
    </div>
    <button type="button" className="mr-[7px] px-px">EN</button>
    <div className="flex w-[81px] items-center gap-[2px] border-l border-[#0d5fc0] bg-linear-to-b from-[#2ea2f4] to-[#1187e4] pl-[4px]">
      <Icon name="trayRed" />
      <Icon name="trayNet" />
      <Icon name="trayPc" />
      <Icon name="trayShield" />
      <span className="whitespace-nowrap">10:23 AM</span>
    </div>
  </div>
);

const App = () => {
  const [doc, setDoc] = useState("DF2_Blade2.ipt");

  return (
    <div className="flex min-h-screen flex-col bg-[#ece9d8] font-['Liberation_Sans',sans-serif] text-[6px] leading-none text-[#111]">
      <header>
        <div className="flex bg-[#3c3c3c]">
          <button
            type="button"
            aria-label="Application menu"
            className="flex w-[22px] flex-col border border-[#555] bg-linear-to-b from-[#a2a2a2] to-[#5a5a5a]"
          >
            <svg viewBox="0 0 20 22" className="h-full w-full" aria-hidden="true">
              <path d="M3 3l5-1v12l4-1v3l-9 2v-3l2-1V5z" fill="#f3b72b" stroke="#a36c10" strokeWidth="0.600" />
              <path d="M15 10h4l-2 2z" fill="#222" />
              <text x="19" y="21" fontSize="4" textAnchor="end" fill="#111">PRO</text>
            </svg>
          </button>
          <div className="min-w-0 flex-1">
            <TitleBar />
            <MenuTabs />
          </div>
        </div>
        <Ribbon />
      </header>

      <div className="flex flex-1">
        <ModelBrowser />
        <div className="flex flex-1 flex-col pr-[2px]">
          <Viewport />
          <DocTabs active={doc} onSelect={setDoc} />
        </div>
      </div>

      <StatusBar />
      <Taskbar />
    </div>
  );
};

export default App;
